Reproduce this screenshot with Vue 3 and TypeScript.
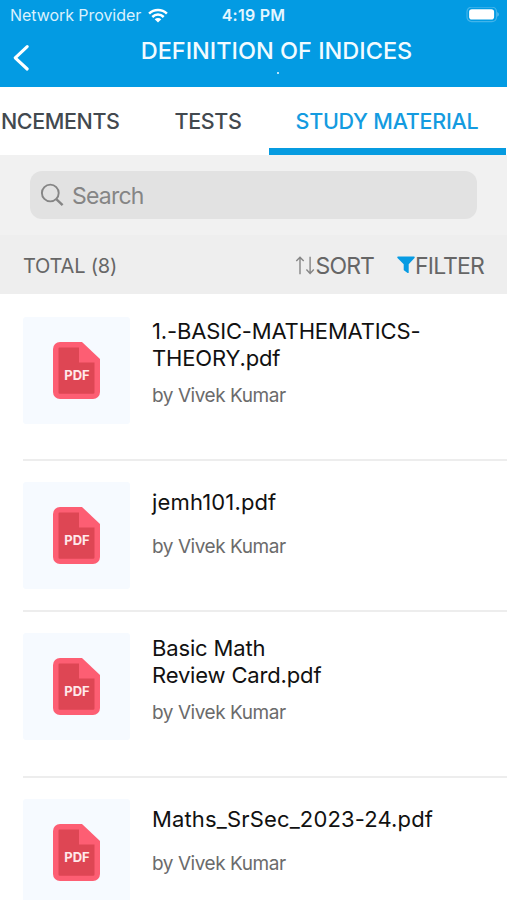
<script setup lang="ts">
interface Material {
  id: number
  lines: string[]
  author: string
}

const tabs = [
  { key: 'announcements', label: 'NCEMENTS' },
  { key: 'tests', label: 'TESTS' },
  { key: 'material', label: 'STUDY MATERIAL' },
]
const activeTab = 'material'

const materials: Material[] = [
  { id: 1, lines: ['1.-BASIC-MATHEMATICS-', 'THEORY.pdf'], author: 'Vivek Kumar' },
  { id: 2, lines: ['jemh101.pdf'], author: 'Vivek Kumar' },
  { id: 3, lines: ['Basic Math', 'Review Card.pdf'], author: 'Vivek Kumar' },
  { id: 4, lines: ['Maths_SrSec_2023-24.pdf'], author: 'Vivek Kumar' },
]
</script>

<template>
  <div class="screen">
    <header class="header">
      <div class="status">
        <div class="carrier">
          <span class="carrier-name">Network Provider</span>
          <svg class="wifi" width="20" height="15" viewBox="0 0 20 15" fill="none" stroke="#fff" stroke-width="2.5">
            <path d="M1.1 5.6C6 0.7 14 0.7 18.9 5.6" />
            <path d="M4.3 9C7.6 5.8 12.4 5.8 15.7 9" />
            <path d="M6.7 11.2C8.6 9.5 11.4 9.5 13.3 11.2L10 14.6Z" fill="#fff" stroke="none" />
          </svg>
        </div>
        <span class="clock">4:19 PM</span>
        <svg class="battery" width="34" height="16" viewBox="0 0 34 16">
          <rect x="1" y="0.2" width="29.5" height="14.4" rx="4.5" fill="none" stroke="#fff" stroke-opacity="0.25" stroke-width="1.2" />
          <rect x="3.1" y="2.2" width="25" height="10.4" rx="2.8" fill="#fff" />
          <path d="M31.4 5C33.2 5.8 33.2 9 31.4 9.8Z" fill="#fff" fill-opacity="0.4" />
        </svg>
      </div>
      <div class="titlebar">
        <svg class="back" width="20" height="30" viewBox="0 0 20 30" fill="none" stroke="#fff" stroke-width="3.1" stroke-linecap="round" stroke-linejoin="round">
          <path d="M16.2 4.6L4.2 15.8L16.2 27" />
        </svg>
        <div class="heading">
          <h1 class="title">DEFINITION OF INDICES</h1>
          <span class="dot"></span>
        </div>
      </div>
    </header>

    <nav class="tabs">
      <div
        v-for="tab in tabs"
        :key="tab.key"
        class="tab"
        :class="[tab.key, { active: tab.key === activeTab }]"
      >
        <span class="tab-label">{{ tab.label }}</span>
      </div>
    </nav>

    <div class="search-area">
      <div class="search">
        <svg width="24" height="24" viewBox="0 0 24 24" fill="none" stroke="#858585" stroke-width="1.9">
          <circle cx="10.3" cy="10" r="8.4" />
          <path d="M16.3 16.1L22.6 22.1" stroke-width="2.4" />
        </svg>
        <span class="placeholder">Search</span>
      </div>
    </div>

    <div class="toolbar">
      <span class="total">TOTAL (8)</span>
      <div class="action">
        <svg width="20" height="20" viewBox="0 0 20 20" fill="none" stroke="#858585" stroke-width="1.4">
          <path d="M5 18.2V1.2M1.3 5L5 1.2L8.7 5" />
          <path d="M15.1 0.8V17.4M11.4 13.6L15.1 17.4L18.8 13.6" />
        </svg>
        <span class="action-label sort">SORT</span>
      </div>
      <div class="action">
        <svg width="18" height="19" viewBox="0 0 18 19" fill="#069be3">
          <path d="M1 0.6H17C17.8 0.6 17.9 1.4 17.5 1.9L11.7 8.2V16.4C11.7 17.1 11.1 17.3 10.6 16.9L7.2 14.6C6.9 14.4 6.7 14.1 6.7 13.8V8.2L0.5 1.9C0.1 1.4 0.2 0.6 1 0.6Z" />
        </svg>
        <span class="action-label filter">FILTER</span>
      </div>
    </div>

    <ul class="list">
      <li v-for="item in materials" :key="item.id" class="row" :class="{ single: item.lines.length === 1 }">
        <div class="thumb">
          <svg width="47" height="57" viewBox="0 0 47 57">
            <path d="M7 0H29L47 17V50A7 7 0 0 1 40 57H7A7 7 0 0 1 0 50V7A7 7 0 0 1 7 0Z" fill="#fd5e73" />
            <path d="M6.5 5.5H26V20.5H41.5V50.5Q41.5 51.8 40.2 51.8H6.8Q5.5 51.8 5.5 50.5V6.5Q5.5 5.5 6.5 5.5Z" fill="#de4654" />
            <text class="badge" x="24" y="38" text-anchor="middle">PDF</text>
          </svg>
        </div>
        <div class="info">
          <div class="name">
            <div v-for="line in item.lines" :key="line">{{ line }}</div>
          </div>
          <div class="author">by {{ item.author }}</div>
        </div>
      </li>
    </ul>
  </div>
</template>

<style>
body {
  margin: 0;
  background: #fff;
  overflow: hidden;
}
</style>

<style scoped>
.screen {
  width: 507px;
  height: 900px;
  overflow: hidden;
  background: #fff;
  font-family: Inter, "Liberation Sans", sans-serif;
  white-space: nowrap;
}
.header {
  height: 87px;
  background: #039be3;
  color: #fff;
}
.status {
  display: grid;
  grid-template-columns: 1fr auto 1fr;
  align-items: center;
  height: 30px;
  padding: 0 7px;
}
.carrier {
  display: flex;
  align-items: center;
  gap: 7px;
  padding-left: 3px;
}
.carrier-name {
  font-size: 16px;
  letter-spacing: -0.06px;
  color: #d9f1fd;
}
.clock {
  font-size: 16px;
  font-weight: 600;
  letter-spacing: 0.25px;
  color: #e4f6ff;
}
.battery {
  justify-self: end;
}
.titlebar {
  display: grid;
  grid-template-columns: 56px 1fr 10px;
  height: 57px;
}
.back {
  margin: 12px 0 0 11px;
}
.heading {
  display: flex;
  flex-direction: column;
  align-items: center;
  padding-top: 7px;
}
.title {
  margin: 0;
  font-size: 23.5px;
  line-height: 28px;
  font-weight: 500;
  color: #f2fbff;
}
.dot {
  width: 2px;
  height: 2px;
  margin: 7px 0 0 3px;
  background: #b5e3fa;
}
.tabs {
  display: grid;
  grid-template-columns: 148px 121px 237px;
  height: 68px;
}
.tab {
  box-sizing: border-box;
  display: flex;
  align-items: center;
  justify-content: center;
  border-bottom: 7px solid transparent;
  padding-top: 7px;
  color: #42494f;
}
.tests {
  padding-right: 1px;
}
.announcements {
  justify-content: flex-start;
  padding-left: 1px;
}
.tab-label {
  font-size: 21.5px;
  font-weight: 500;
  letter-spacing: -0.4px;
}
.material .tab-label {
  letter-spacing: -0.25px;
}
.active {
  padding-right: 1px;
  border-bottom-color: #069be0;
  color: #149be0;
}
.search-area {
  height: 80px;
  box-sizing: border-box;
  padding: 16px 30px;
  background: #f1f1f1;
}
.search {
  display: flex;
  align-items: center;
  gap: 8px;
  width: 447px;
  height: 48px;
  box-sizing: border-box;
  padding-left: 10px;
  border-radius: 12px;
  background: #e2e2e2;
}
.placeholder {
  padding-top: 1px;
  font-size: 23px;
  letter-spacing: -0.8px;
  color: #858585;
}
.toolbar {
  box-sizing: border-box;
  display: flex;
  align-items: center;
  height: 59px;
  padding: 2px 23px 0 23px;
  background: #eee;
  color: #666;
}
.total {
  margin-right: auto;
  font-size: 20px;
  letter-spacing: -0.2px;
}
.action {
  display: flex;
  align-items: center;
  margin-left: 23px;
}
.action-label {
  font-size: 23px;
  letter-spacing: -0.85px;
}
.list {
  margin: 0;
  padding: 1px 0 0 23px;
  list-style: none;
}
.row {
  display: flex;
  gap: 22px;
  height: 164px;
  border-bottom: 2px solid #ededed;
}
.row.single {
  height: 149px;
}
.thumb {
  display: flex;
  align-items: center;
  justify-content: center;
  width: 107px;
  height: 107px;
  margin-top: 21px;
  border-radius: 3px;
  background: #f6faff;
}
.row:first-child .thumb {
  margin-top: 22px;
}
.badge {
  font-family: Inter, sans-serif;
  font-size: 13px;
  font-weight: 700;
  fill: #ffe9eb;
}
.info {
  padding-top: 23px;
}
.single .info {
  padding-top: 28px;
}
.name {
  font-size: 22px;
  line-height: 27px;
  letter-spacing: -0.16px;
  color: #111;
}
.single .name {
  letter-spacing: 0.15px;
}
.author {
  margin-top: 11px;
  font-size: 19px;
  line-height: 25px;
  letter-spacing: -0.45px;
  color: #6b6b6b;
}
.single .author {
  margin-top: 18px;
}
</style>
